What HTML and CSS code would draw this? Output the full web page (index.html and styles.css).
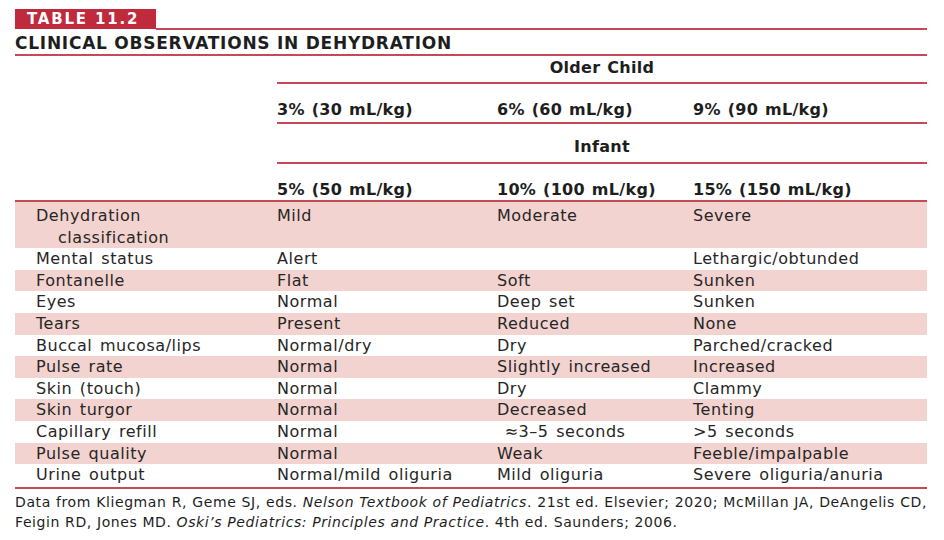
FILE: index.html
```html
<!DOCTYPE html>
<html>
<head>
<meta charset="utf-8">
<link rel="stylesheet" href="styles.css">
</head>
<body>
<div class="page">
  <div class="badge-row">
    <div class="badge">TABLE 11.2</div>
    <div class="badge-line"></div>
  </div>
  <div class="title">CLINICAL OBSERVATIONS IN DEHYDRATION</div>

  <div class="grid">
    <div class="hcell blank r1"></div>
    <div class="hcell span r1 ruled">Older Child</div>

    <div class="hcell blank r2"></div>
    <div class="hcell r2 ruled">3% (30 mL/kg)</div>
    <div class="hcell r2 ruled">6% (60 mL/kg)</div>
    <div class="hcell r2 ruled">9% (90 mL/kg)</div>

    <div class="hcell blank r3"></div>
    <div class="hcell span r3 ruled">Infant</div>

    <div class="hcell r4 full"></div>
    <div class="hcell r4 full">5% (50 mL/kg)</div>
    <div class="hcell r4 full">10% (100 mL/kg)</div>
    <div class="hcell r4 full">15% (150 mL/kg)</div>
  </div>

  <div class="body">
    <div class="row pink first">
      <div class="label">Dehydration<br>classification</div>
      <div>Mild</div><div>Moderate</div><div>Severe</div>
    </div>
    <div class="row">
      <div class="label">Mental status</div>
      <div>Alert</div><div></div><div>Lethargic/obtunded</div>
    </div>
    <div class="row pink">
      <div class="label">Fontanelle</div>
      <div>Flat</div><div>Soft</div><div>Sunken</div>
    </div>
    <div class="row">
      <div class="label">Eyes</div>
      <div>Normal</div><div>Deep set</div><div>Sunken</div>
    </div>
    <div class="row pink">
      <div class="label">Tears</div>
      <div>Present</div><div>Reduced</div><div>None</div>
    </div>
    <div class="row">
      <div class="label">Buccal mucosa/lips</div>
      <div>Normal/dry</div><div>Dry</div><div>Parched/cracked</div>
    </div>
    <div class="row pink">
      <div class="label">Pulse rate</div>
      <div>Normal</div><div>Slightly increased</div><div>Increased</div>
    </div>
    <div class="row">
      <div class="label">Skin (touch)</div>
      <div>Normal</div><div>Dry</div><div>Clammy</div>
    </div>
    <div class="row pink">
      <div class="label">Skin turgor</div>
      <div>Normal</div><div>Decreased</div><div>Tenting</div>
    </div>
    <div class="row">
      <div class="label">Capillary refill</div>
      <div>Normal</div><div>&nbsp;≈3–5 seconds</div><div>&gt;5 seconds</div>
    </div>
    <div class="row pink">
      <div class="label">Pulse quality</div>
      <div>Normal</div><div>Weak</div><div>Feeble/impalpable</div>
    </div>
    <div class="row">
      <div class="label">Urine output</div>
      <div>Normal/mild oliguria</div><div>Mild oliguria</div><div>Severe oliguria/anuria</div>
    </div>
  </div>

  <div class="note">
    <div class="note-line justified">Data from Kliegman R, Geme SJ, eds. <i>Nelson Textbook of Pediatrics</i>. 21st ed. Elsevier; 2020; McMillan JA, DeAngelis CD,</div>
    <div class="note-line">Feigin RD, Jones MD. <i>Oski’s Pediatrics: Principles and Practice</i>. 4th ed. Saunders; 2006.</div>
  </div>
</div>
</body>
</html>
```

FILE: styles.css
```css
html, body {
  margin: 0;
  padding: 0;
  background: #ffffff;
}

.page {
  width: 912px;
  margin-left: 15px;
  padding-top: 9px;
  font-family: "DejaVu Sans", "Liberation Sans", sans-serif;
  color: #262626;
}

.badge-row {
  display: flex;
  align-items: flex-end;
}

.badge {
  background: #bf2a3c;
  color: #ffffff;
  font-weight: bold;
  font-size: 15px;
  letter-spacing: 1.8px;
  line-height: 20px;
  padding: 0 17px 0 12px;
}

.badge-line {
  flex: 1;
  height: 2px;
  margin-bottom: -1px;
  background: #c44a58;
}

.title {
  font-weight: bold;
  font-size: 17px;
  letter-spacing: 0.75px;
  line-height: 22px;
  padding-top: 3px;
  color: #1e1e1e;
  border-bottom: 2px solid #c44a58;
}

.grid {
  display: grid;
  grid-template-columns: 262px 220px 196px 234px;
}

.hcell {
  font-weight: bold;
  font-size: 16px;
  letter-spacing: 0.3px;
  word-spacing: 1px;
  line-height: 20px;
  color: #1e1e1e;
}

.span {
  grid-column: 2 / 5;
  text-align: center;
}

.ruled {
  border-bottom: 2px solid #c44a58;
}

.full {
  border-bottom: 2px solid #c44a58;
}

.r1 { padding-top: 2px; height: 24px; }
.r2 { padding-top: 16px; height: 22px; }
.r3 { padding-top: 13px; height: 25px; }
.r4 { padding-top: 16px; height: 20px; }

.r1.blank, .r2.blank, .r3.blank {
  border-bottom: 2px solid transparent;
}

.body {
  border-bottom: 2px solid #c44a58;
  padding-bottom: 1px;
}

.row {
  display: grid;
  grid-template-columns: 262px 220px 196px 234px;
  font-size: 16px;
  line-height: 21.6px;
  letter-spacing: 0.55px;
  word-spacing: 2px;
}

.row.pink {
  background: #f3d3cf;
}

.row.first {
  padding-top: 3px;
}

.label {
  padding-left: 43px;
  text-indent: -22px;
}

.note {
  margin-top: 3px;
  font-size: 14px;
  letter-spacing: 0.6px;
  line-height: 20px;
  color: #1e1e1e;
}

.note-line {
  white-space: nowrap;
}

.note-line.justified {
  text-align: justify;
  text-align-last: justify;
}
```
